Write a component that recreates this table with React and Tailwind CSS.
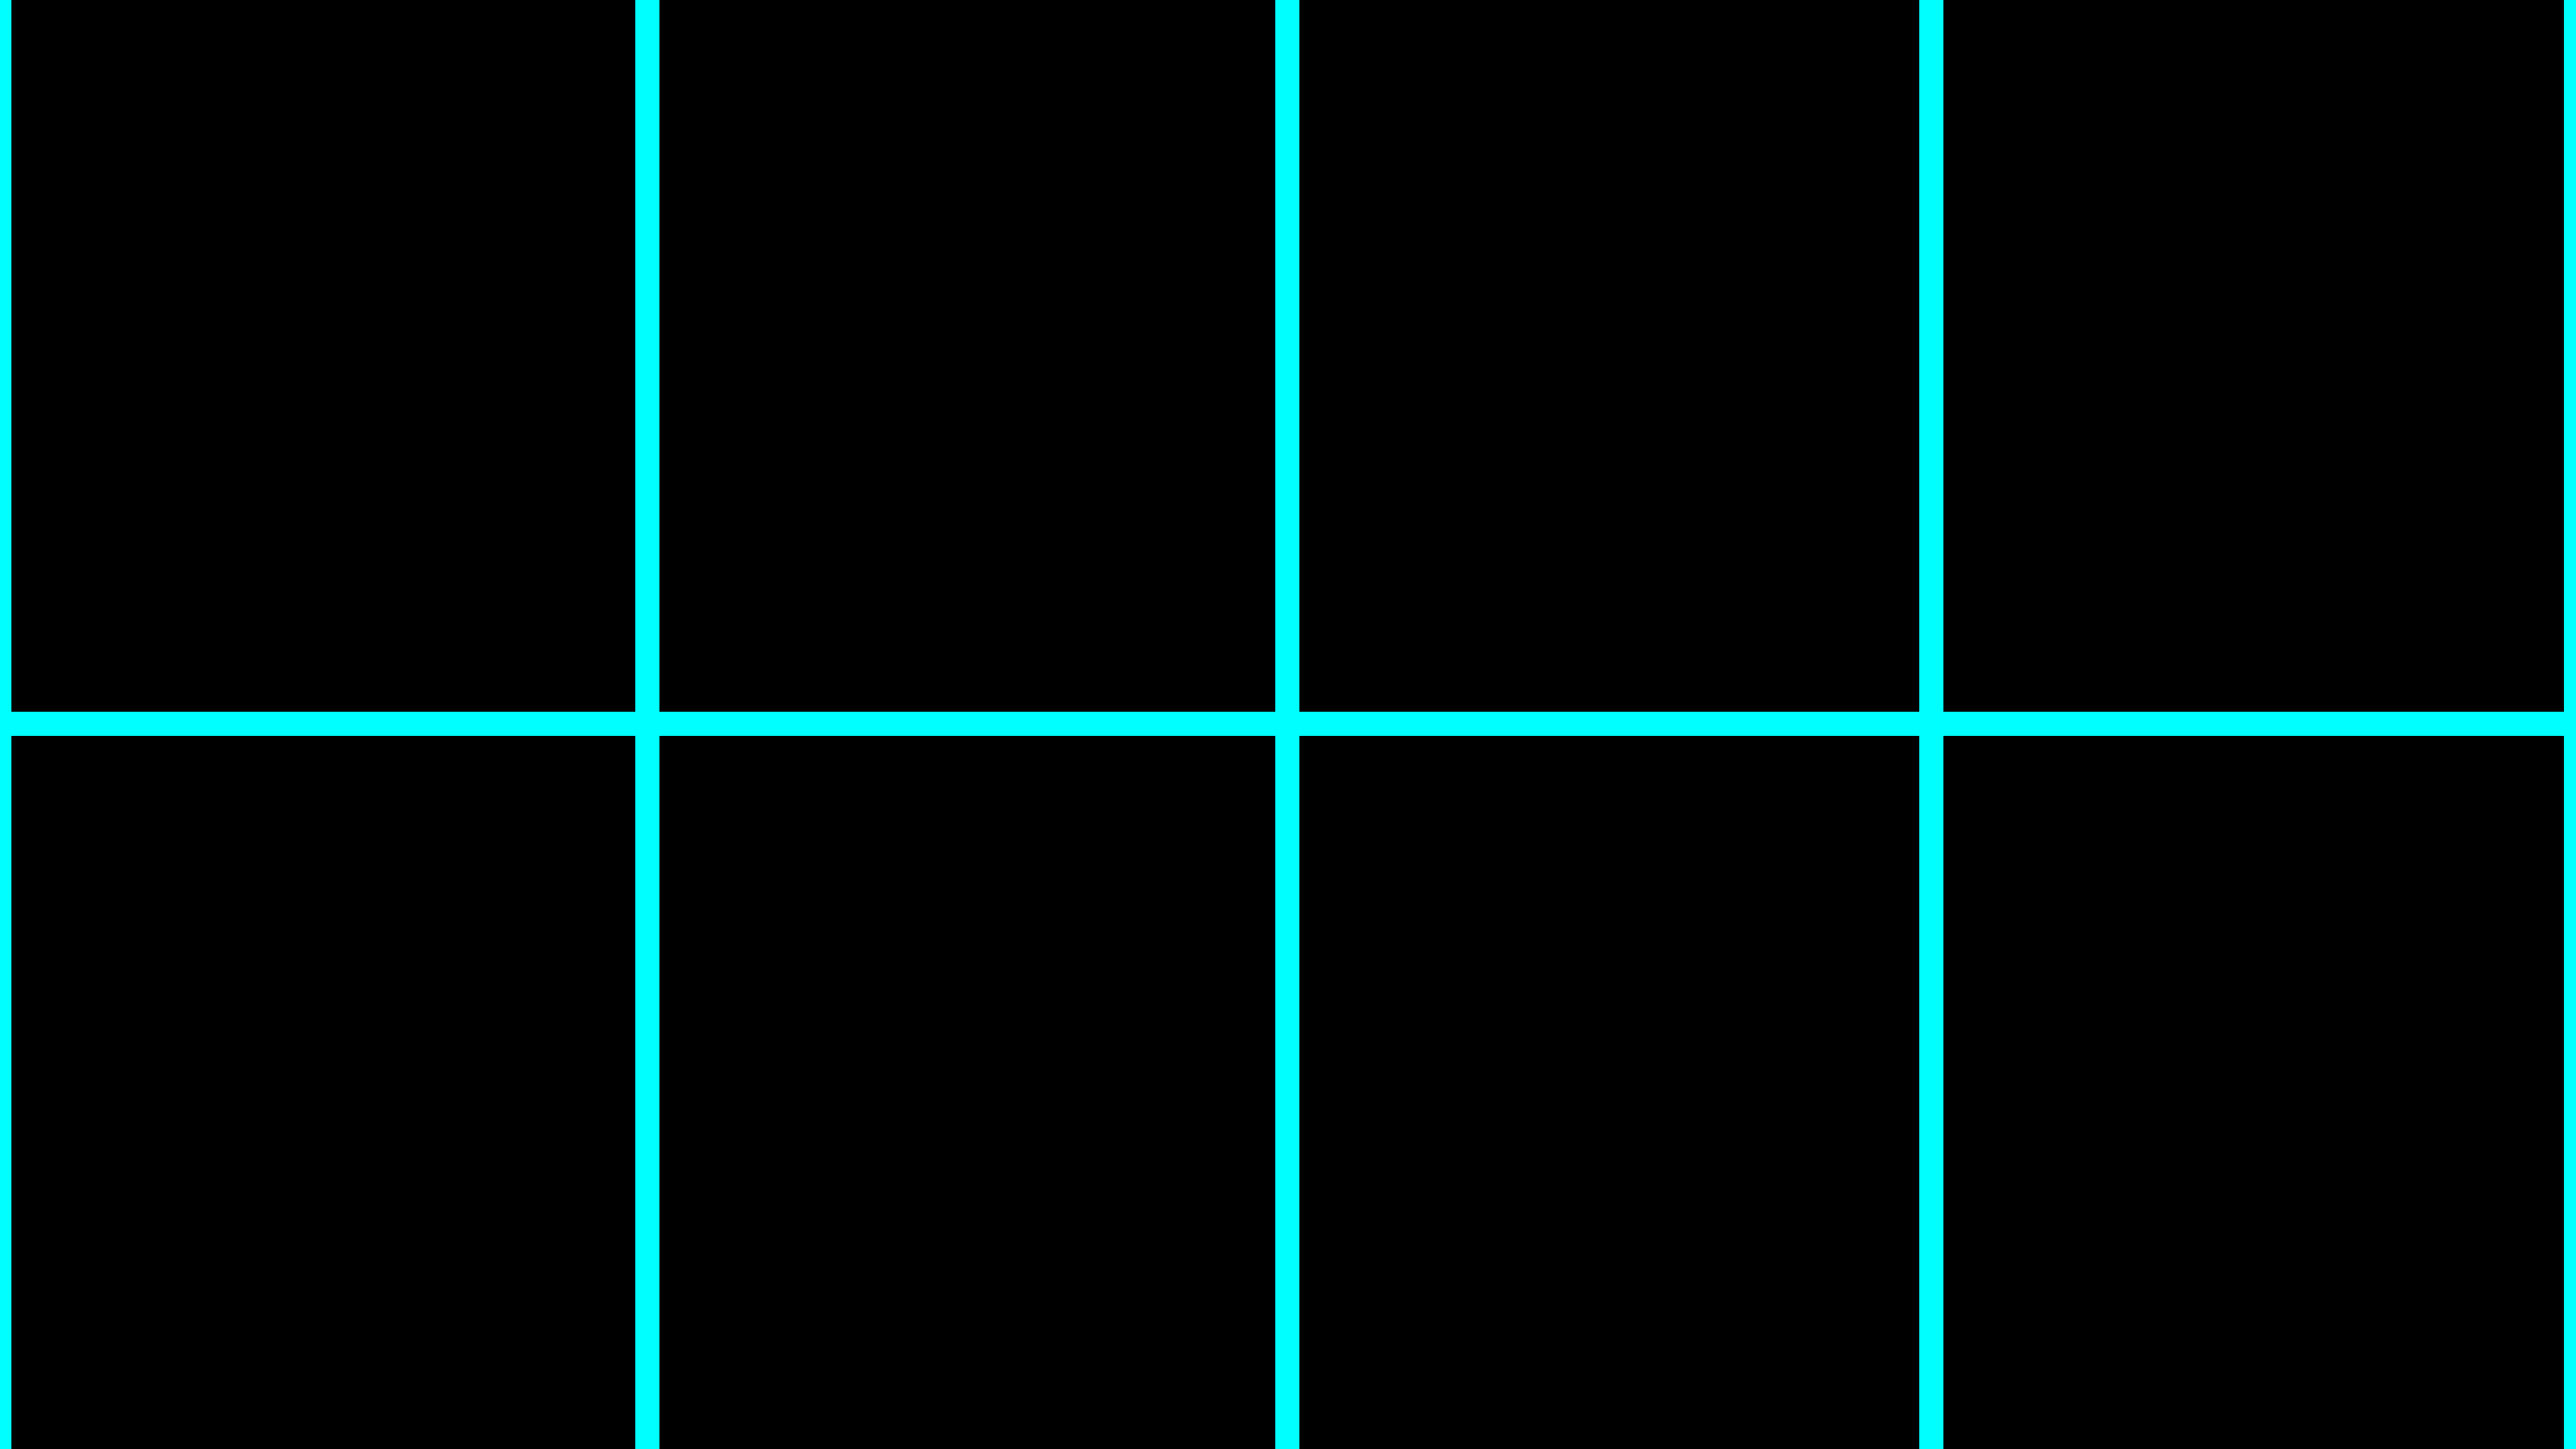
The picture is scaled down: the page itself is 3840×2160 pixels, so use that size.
const panels = Array.from({ length: 8 }, (_, i) => i);

export default function App() {
  return (
    <div className="w-[3840px] h-[2160px] bg-[#00ffff] overflow-hidden">
      <div className="grid h-full grid-cols-[930px_918px_924px_925px] grid-rows-[1061px_1063px] gap-[36px] pl-[17px] pr-[18px]">
        {panels.map((p) => (
          <div key={p} className="bg-black" />
        ))}
      </div>
    </div>
  );
}
